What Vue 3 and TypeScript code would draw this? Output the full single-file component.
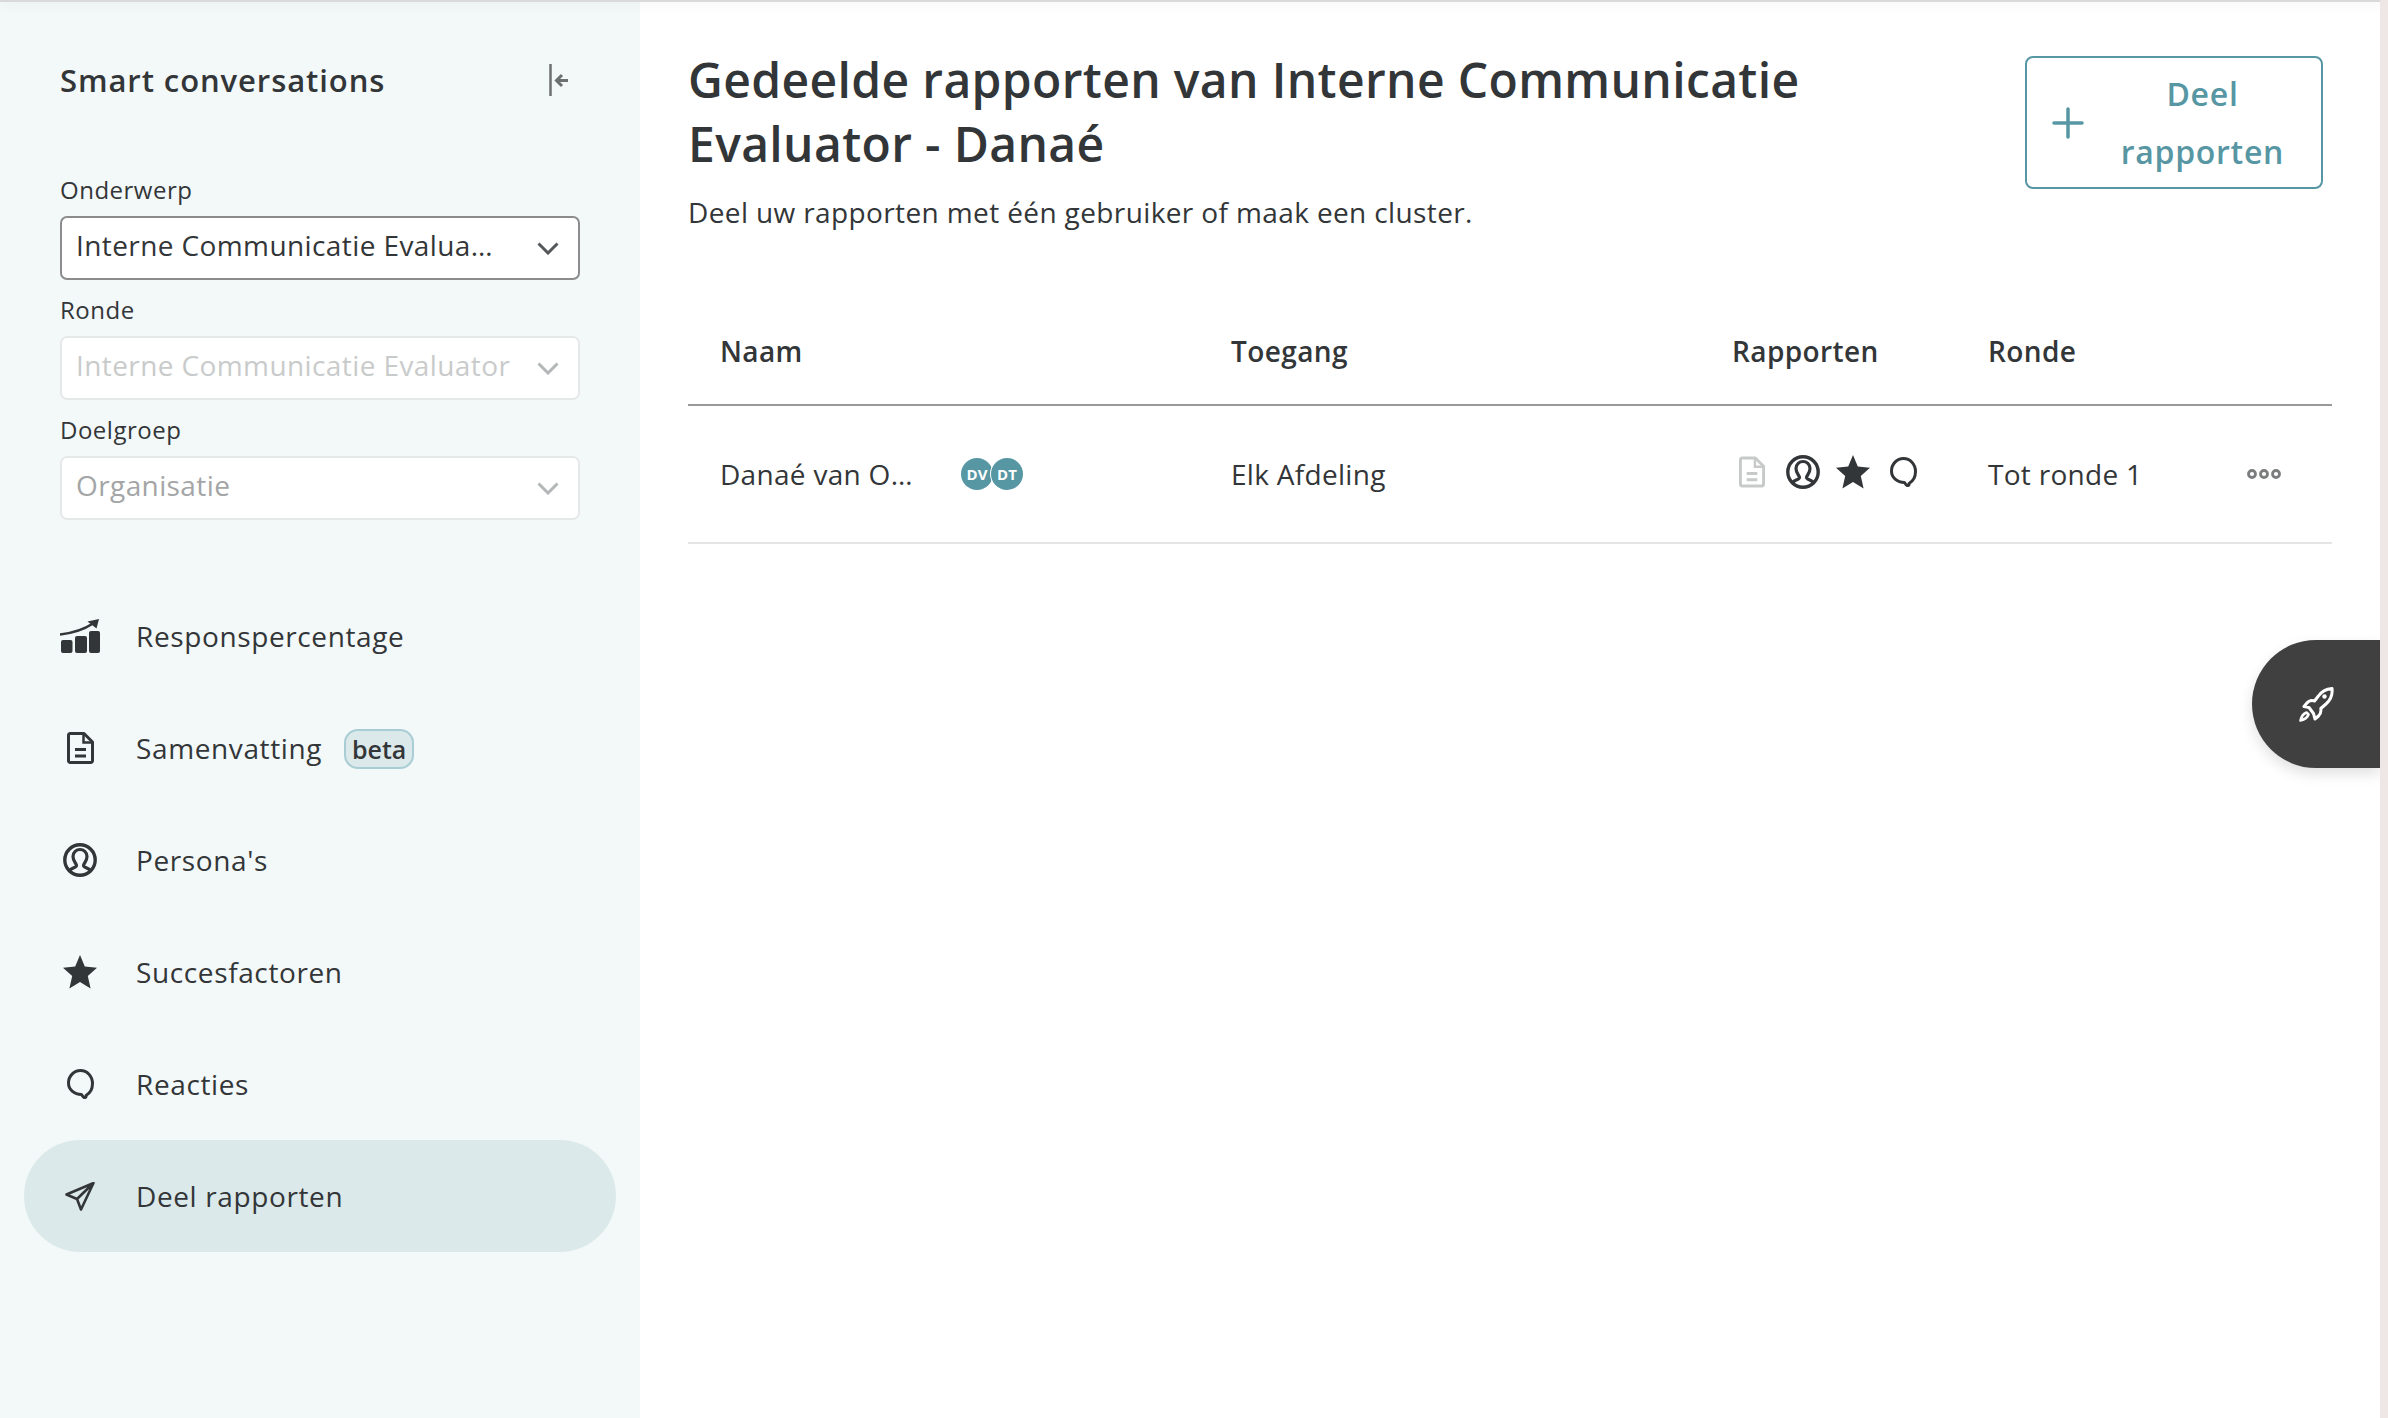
<template>
  <div class="page">
    <svg class="defs" aria-hidden="true">
      <symbol id="i-chart" viewBox="0 0 40 34">
        <rect x="1" y="21" width="11.5" height="13" rx="2" fill="currentColor" />
        <rect x="15" y="17" width="12" height="17" rx="2" fill="currentColor" />
        <rect x="29" y="12" width="11" height="22" rx="2" fill="currentColor" />
        <path d="M0 15.5C13 14 24 10.500 33 4.500" fill="none" stroke="currentColor" stroke-width="2.600" />
        <path d="M27.500 2.500L39 0L36.500 9.500Z" fill="currentColor" />
      </symbol>
      <symbol id="i-doc" viewBox="0 0 27 32">
        <path d="M3 1.500H17L25.500 10V29A1.700 1.700 0 0 1 24 30.500H3A1.700 1.700 0 0 1 1.500 29V3A1.700 1.700 0 0 1 3 1.500Z" fill="none" stroke="currentColor" stroke-width="3" stroke-linejoin="round" />
        <path d="M16.500 2V10.500H25" fill="none" stroke="currentColor" stroke-width="2.500" />
        <path d="M8 17.500H19M8 24H19" stroke="currentColor" stroke-width="3" />
      </symbol>
      <symbol id="i-persona" viewBox="0 0 34 34">
        <circle cx="17" cy="17" r="15.200" fill="none" stroke="currentColor" stroke-width="3.400" />
        <path d="M6.500 28C8 24.500 13.500 25 13.500 22.500C13.500 20.500 10 18.500 10 13.500C10 9 13.500 6.500 17 6.500C20.500 6.500 24 9 24 13.500C24 18.500 20.500 20.500 20.500 22.500C20.500 25 26 24.500 27.500 28" fill="none" stroke="currentColor" stroke-width="3.200" />
      </symbol>
      <symbol id="i-star" viewBox="0 0 34 34">
        <path d="M17 0L21.800 11.600L34 12.800L24.800 21L27.600 33.500L17 27L6.400 33.500L9.200 21L0 12.800L12.200 11.600Z" fill="currentColor" />
      </symbol>
      <symbol id="i-bubble" viewBox="0 0 27 30">
        <path d="M19 26.500C22.500 24.500 25.500 20.500 25.500 14.500C25.500 7 20 1.500 13.500 1.500C7 1.500 1.500 7 1.500 14C1.500 20.500 7 25.500 14.500 25.500C15.500 27 16 28 17 28.500C18.500 28.800 19.500 27.800 19 26.500Z" fill="none" stroke="currentColor" stroke-width="3" stroke-linejoin="round" />
      </symbol>
      <symbol id="i-send" viewBox="0 0 30 29">
        <path d="M28.500 1L1.500 12.500L12 17L16 27.500ZM28.500 1L12 17" fill="none" stroke="currentColor" stroke-width="2.600" stroke-linejoin="round" />
      </symbol>
      <symbol id="i-rocket" viewBox="0 0 35 35">
        <path d="M33 1.500C26.500 2 22 5 19 9.500L15.500 14C12.500 13 9.500 14 7.500 16.500L5 19.500L10 20.500L14.500 26.500L16 32L19.500 29C21.500 27 22.300 24.500 21.800 21.500L27 17C31.500 13 33.800 8 33 1.500Z" fill="none" stroke="currentColor" stroke-width="3" stroke-linejoin="round" />
        <circle cx="25.500" cy="9.500" r="2.200" fill="currentColor" />
        <path d="M7.500 25.500C4.500 26.500 2.500 29 1.500 33.500C6 32.500 8.500 30.500 9.500 27.500Z" fill="none" stroke="currentColor" stroke-width="2.600" stroke-linejoin="round" />
      </symbol>
    </svg>

    <div class="topbar"></div>

    <aside class="sidebar">
      <div class="side-head">
        <span class="side-title">Smart conversations</span>
        <svg class="collapse" viewBox="0 0 20 32" fill="none" stroke="currentColor">
          <path d="M1.500 0V32" stroke-width="2.500" />
          <path d="M19 16.500H8M13 11L7.500 16.500L13 22" stroke-width="3" />
        </svg>
      </div>

      <div class="filters">
        <div v-for="f in filters" :key="f.label" class="filter">
          <label>{{ f.label }}</label>
          <div class="select" :class="f.state">
            <span class="select-text" :class="{ cut: f.cut }">{{ f.value }}</span>
            <svg class="chevron" viewBox="0 0 22 13" fill="none" stroke="currentColor" stroke-width="3">
              <path d="M1.500 1.500L11 11L20.500 1.500" />
            </svg>
          </div>
        </div>
      </div>

      <nav class="menu">
        <div v-for="m in menu" :key="m.label" class="menu-item" :class="{ active: m.active }">
          <span class="menu-icon">
            <svg :style="{ width: m.w + 'px', height: m.h + 'px' }"><use :href="'#' + m.icon" /></svg>
          </span>
          <span class="menu-label">{{ m.label }}</span>
          <span v-if="m.badge" class="badge">{{ m.badge }}</span>
        </div>
      </nav>
    </aside>

    <main class="content">
      <header class="head">
        <div class="head-text">
          <h1>Gedeelde rapporten van Interne Communicatie Evaluator - Danaé</h1>
          <p>Deel uw rapporten met één gebruiker of maak een cluster.</p>
        </div>
        <button class="share">
          <svg class="plus" viewBox="0 0 32 32" stroke="currentColor" stroke-width="3.500" stroke-linecap="round">
            <path d="M16 2V30M2 16H30" />
          </svg>
          <span>Deel rapporten</span>
        </button>
      </header>

      <div class="table">
        <div class="row header-row">
          <div>Naam</div>
          <div>Toegang</div>
          <div>Rapporten</div>
          <div>Ronde</div>
          <div></div>
        </div>
        <div class="row body-row">
          <div class="name-cell">
            <span class="name">Danaé van Oosterhout</span>
            <span class="avatars">
              <span class="avatar">DV</span>
              <span class="avatar">DT</span>
            </span>
          </div>
          <div>Elk Afdeling</div>
          <div class="report-icons">
            <svg class="muted doc"><use href="#i-doc" /></svg>
            <svg class="r-icon"><use href="#i-persona" /></svg>
            <svg class="r-icon"><use href="#i-star" /></svg>
            <svg class="bubble"><use href="#i-bubble" /></svg>
          </div>
          <div>Tot ronde 1</div>
          <div class="more">
            <svg viewBox="0 0 34 10" fill="none" stroke="currentColor" stroke-width="2.800">
              <circle cx="5" cy="5" r="3.500" />
              <circle cx="17" cy="5" r="3.500" />
              <circle cx="29" cy="5" r="3.500" />
            </svg>
          </div>
        </div>
      </div>

      <div class="fab">
        <svg><use href="#i-rocket" /></svg>
      </div>
    </main>
  </div>
</template>

<script setup lang="ts">
interface Filter {
  label: string
  value: string
  state: string
  cut?: boolean
}

interface MenuItem {
  label: string
  icon: string
  w: number
  h: number
  badge?: string
  active?: boolean
}

const filters: Filter[] = [
  { label: 'Onderwerp', value: 'Interne Communicatie Evaluator', state: 'open', cut: true },
  { label: 'Ronde', value: 'Interne Communicatie Evaluator', state: 'off' },
  { label: 'Doelgroep', value: 'Organisatie', state: 'off dim' }
]

const menu: MenuItem[] = [
  { label: 'Responspercentage', icon: 'i-chart', w: 40, h: 34 },
  { label: 'Samenvatting', icon: 'i-doc', w: 27, h: 32, badge: 'beta' },
  { label: "Persona's", icon: 'i-persona', w: 34, h: 34 },
  { label: 'Succesfactoren', icon: 'i-star', w: 34, h: 34 },
  { label: 'Reacties', icon: 'i-bubble', w: 27, h: 30 },
  { label: 'Deel rapporten', icon: 'i-send', w: 30, h: 29, active: true }
]
</script>

<style>
html, body {
  margin: 0;
  background: #efe6e6;
}
</style>

<style scoped>
.page {
  position: relative;
  display: flex;
  width: 2380px;
  height: 1418px;
  overflow: hidden;
  background: #fff;
  color: #333638;
  font-family: "Open Sans", "Liberation Sans", sans-serif;
}
.defs {
  position: absolute;
  width: 0;
  height: 0;
}
.topbar {
  position: absolute;
  top: 0;
  left: 0;
  right: 0;
  height: 2px;
  background: #d9d9d9;
  box-shadow: 0 2px 12px rgba(0, 0, 0, 0.14);
}
.sidebar {
  flex: 0 0 640px;
  box-sizing: border-box;
  background: #f3f8f8;
  padding-top: 63px;
}
.side-head {
  display: flex;
  justify-content: space-between;
  align-items: center;
  height: 34px;
  padding: 0 71px 0 60px;
}
.side-title {
  font-size: 31px;
  font-weight: 600;
  letter-spacing: 0.92px;
}
.collapse {
  width: 20px;
  height: 32px;
  color: #6d7071;
}
.filters {
  margin-top: 78px;
  padding: 0 60px;
}
.filter {
  display: flex;
  flex-direction: column;
  height: 120px;
}
.filter label {
  height: 41px;
  line-height: 29px;
  font-size: 24px;
  font-weight: 500;
  letter-spacing: 0.5px;
}
.select {
  box-sizing: border-box;
  display: flex;
  align-items: center;
  justify-content: space-between;
  height: 64px;
  padding: 0 19px 0 14px;
  background: #fff;
  border: 2px solid #e6e9e9;
  border-radius: 7px;
  font-size: 28px;
  letter-spacing: 0.4px;
}
.select.open {
  border-color: #8a8c8d;
}
.select.off {
  color: #c9cbcb;
}
.select.dim {
  color: #a3a5a6;
}
.select-text {
  white-space: nowrap;
  padding-bottom: 7px;
}
.select-text.cut {
  width: 418px;
  overflow: hidden;
  text-overflow: ellipsis;
}
.chevron {
  width: 22px;
  height: 13px;
  color: #55585a;
}
.select.off .chevron {
  color: #b4b7b8;
}
.menu {
  margin-top: 45px;
  padding: 0 24px;
}
.menu-item {
  display: flex;
  align-items: center;
  height: 112px;
  border-radius: 56px;
}
.menu-item.active {
  background: #dce9ea;
}
.menu-icon {
  display: flex;
  justify-content: center;
  align-items: center;
  width: 40px;
  margin-left: 36px;
  margin-right: 36px;
}
.menu-label {
  font-size: 28px;
  font-weight: 500;
  letter-spacing: 0.62px;
}
.badge {
  box-sizing: border-box;
  width: 70px;
  height: 40px;
  margin: 2px 0 0 22px;
  text-align: center;
  line-height: 37px;
  font-size: 25px;
  font-weight: 600;
  background: #dce9ea;
  border: 2px solid #a9cdd5;
  border-radius: 14px;
}
.content {
  position: relative;
  flex: 1;
  padding: 0 48px 0 48px;
}
.head {
  display: flex;
  justify-content: space-between;
  padding-top: 48px;
}
.head-text {
  width: 1200px;
}
h1 {
  margin: 0;
  font-size: 48px;
  line-height: 64px;
  font-weight: 600;
  letter-spacing: 0.36px;
}
p {
  margin: 17px 0 0;
  font-size: 28px;
  line-height: 38px;
  letter-spacing: 0.38px;
}
.share {
  box-sizing: border-box;
  display: flex;
  align-items: center;
  width: 298px;
  height: 133px;
  margin: 8px 9px 0 0;
  padding: 0 27px 0 25px;
  background: #fff;
  border: 2px solid #5796a3;
  border-radius: 8px;
  color: #5796a3;
  font-family: inherit;
  font-size: 32px;
  font-weight: 600;
  line-height: 58px;
  letter-spacing: 0.7px;
}
.plus {
  flex: 0 0 32px;
  height: 32px;
}
.share span {
  flex: 1;
  text-align: center;
  padding-left: 27px;
}
.table {
  margin-top: 64px;
}
.row {
  display: grid;
  grid-template-columns: 511px 501px 256px 1fr 85px;
  align-items: center;
  padding-left: 32px;
  box-sizing: border-box;
}
.header-row {
  height: 111px;
  padding-top: 3px;
  border-bottom: 2px solid #999;
  font-size: 28px;
  font-weight: 600;
  letter-spacing: 0.4px;
}
.body-row {
  height: 138px;
  border-bottom: 2px solid #e5e5e5;
  font-size: 28px;
  letter-spacing: 0.3px;
}
.name-cell {
  display: flex;
  align-items: center;
}
.name {
  width: 197px;
  overflow: hidden;
  white-space: nowrap;
  text-overflow: ellipsis;
}
.avatars {
  display: flex;
  margin-left: 44px;
}
.avatar {
  width: 32px;
  height: 32px;
  line-height: 32px;
  border-radius: 50%;
  background: #5796a3;
  color: #fff;
  font-size: 15px;
  font-weight: 700;
  letter-spacing: 0;
  text-align: center;
}
.avatar + .avatar {
  margin-left: -2px;
  box-shadow: 0 0 0 1px #fff;
}
.report-icons {
  display: flex;
  align-items: center;
  margin: 0 0 4px 7px;
}
.report-icons svg {
  flex: none;
}
.muted {
  color: #c8c9c9;
}
.doc {
  width: 26px;
  height: 34px;
  margin-right: 21px;
}
.r-icon {
  width: 34px;
  height: 34px;
  margin-right: 16px;
}
.bubble {
  width: 27px;
  height: 30px;
  margin-left: 4px;
}
.more {
  display: flex;
}
.more svg {
  width: 34px;
  height: 10px;
  color: #7b7d7e;
}
.fab {
  position: absolute;
  top: 640px;
  right: 0;
  display: flex;
  align-items: center;
  justify-content: center;
  width: 128px;
  height: 128px;
  border-radius: 64px 0 0 64px;
  background: #404041;
  color: #fff;
  box-shadow: 0 6px 14px rgba(0, 0, 0, 0.12);
}
.fab svg {
  width: 35px;
  height: 35px;
}
</style>
